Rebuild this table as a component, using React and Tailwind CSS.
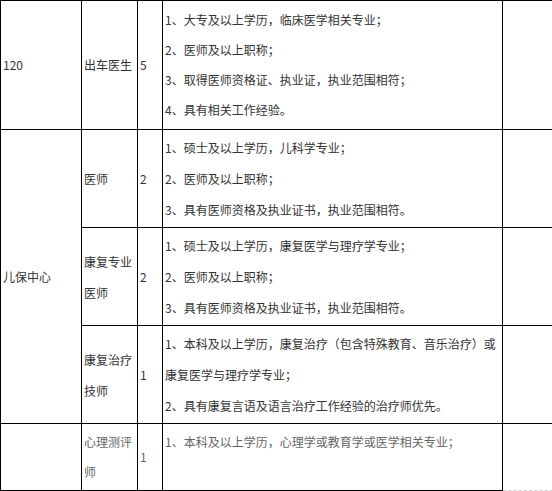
const cell = "border border-black align-middle px-[2px] py-0";

function Lines({ items, lh = "leading-[31px]" }) {
  return (
    <div className={lh}>
      {items.map((t, i) => (
        <p key={i} className="whitespace-nowrap min-h-[1px]">
          {t || "\u00a0"}
        </p>
      ))}
    </div>
  );
}

export default function App() {
  return (
    <div className="w-[552px] h-[491px] overflow-hidden bg-white font-['Noto_Sans_CJK_SC',sans-serif] text-[12px] text-[#333]">
      <table className="table-fixed border-collapse w-[552px]">
        <colgroup>
          <col className="w-[81px]" />
          <col className="w-[56px]" />
          <col className="w-[25px]" />
          <col className="w-[340px]" />
          <col className="w-[50px]" />
        </colgroup>
        <tbody>
          <tr className="h-[129px]">
            <td className={cell}>120</td>
            <td className={cell}>出车医生</td>
            <td className={cell}>5</td>
            <td className={cell}>
              <Lines
                lh="leading-[30px]"
                items={[
                  "1、大专及以上学历，临床医学相关专业；",
                  "2、医师及以上职称；",
                  "3、取得医师资格证、执业证，执业范围相符；",
                  "4、具有相关工作经验。",
                ]}
              />
            </td>
            <td className="border-t border-l border-b border-black"></td>
          </tr>
          <tr className="h-[98px]">
            <td className={cell} rowSpan={3}>
              儿保中心
            </td>
            <td className={cell}>医师</td>
            <td className={cell}>2</td>
            <td className={cell}>
              <Lines
                items={[
                  "1、硕士及以上学历，儿科学专业；",
                  "2、医师及以上职称；",
                  "3、具有医师资格及执业证书，执业范围相符。",
                ]}
              />
            </td>
            <td className="border-l border-b border-black"></td>
          </tr>
          <tr className="h-[98px]">
            <td className={cell}>
              <Lines items={["康复专业", "医师"]} />
            </td>
            <td className={cell}>2</td>
            <td className={cell}>
              <Lines
                items={[
                  "1、硕士及以上学历，康复医学与理疗学专业；",
                  "2、医师及以上职称；",
                  "3、具有医师资格及执业证书，执业范围相符。",
                ]}
              />
            </td>
            <td className="border-l border-b border-black"></td>
          </tr>
          <tr className="h-[98px]">
            <td className={cell}>
              <Lines items={["康复治疗", "技师"]} />
            </td>
            <td className={cell}>1</td>
            <td className={cell}>
              <Lines
                items={[
                  "1、本科及以上学历，康复治疗（包含特殊教育、音乐治疗）或",
                  "康复医学与理疗学专业；",
                  "2、具有康复言语及语言治疗工作经验的治疗师优先。",
                ]}
              />
            </td>
            <td className="border-l border-b border-black"></td>
          </tr>
          <tr className="h-[67px] text-[#666]">
            <td className={cell}></td>
            <td className={cell}>
              <Lines lh="leading-[30px]" items={["心理测评", "师"]} />
            </td>
            <td className={cell}>1</td>
            <td className={cell}>
              <Lines
                lh="leading-[30px]"
                items={["1、本科及以上学历，心理学或教育学或医学相关专业；", ""]}
              />
            </td>
            <td className="border-l border-t border-black border-r border-b border-r-[#ccc] border-b-[#ccc] [border-right-style:dashed] [border-bottom-style:dashed]"></td>
          </tr>
        </tbody>
      </table>
    </div>
  );
}
